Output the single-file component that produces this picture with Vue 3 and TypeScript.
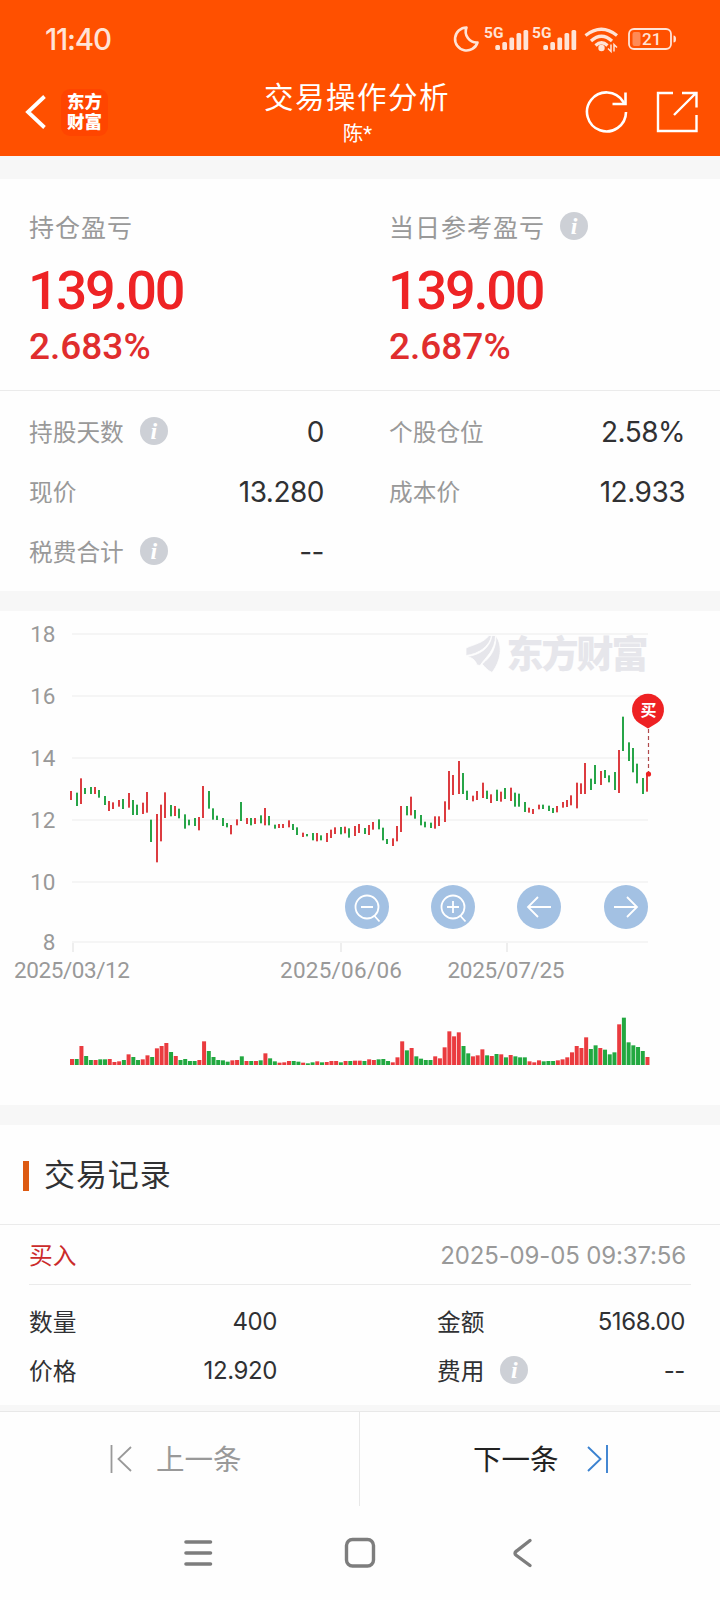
<script setup lang="ts">
interface Candle {
  x: number
  top: number
  height: number
  vx: number
  vh: number
  up: boolean
}

interface Field {
  label: string
  value: string
  info?: boolean
}

// Top and bottom of each bar in thirds of a pixel below y = 120 of the chart; r = rising, g = falling
const ranges: [number, number, string][] = [
  [153, 180, 'r'], [158, 198, 'g'], [115, 192, 'r'], [144, 162, 'g'], [141, 162, 'g'], [141, 162, 'r'],
  [150, 173, 'g'], [168, 195, 'g'], [183, 213, 'r'], [187, 207, 'r'], [180, 200, 'r'], [177, 207, 'g'],
  [159, 203, 'r'], [180, 225, 'g'], [194, 225, 'g'], [188, 222, 'r'], [156, 218, 'r'], [239, 306, 'g'],
  [222, 367, 'r'], [194, 304, 'r'], [157, 234, 'r'], [195, 229, 'g'], [198, 228, 'r'], [206, 235, 'g'],
  [223, 266, 'g'], [239, 256, 'g'], [234, 258, 'g'], [231, 271, 'r'], [138, 234, 'r'], [153, 206, 'g'],
  [205, 239, 'g'], [227, 240, 'g'], [234, 258, 'g'], [249, 262, 'g'], [255, 283, 'r'], [238, 256, 'r'],
  [186, 243, 'g'], [234, 252, 'r'], [234, 256, 'g'], [234, 252, 'r'], [226, 250, 'g'], [204, 256, 'r'],
  [228, 256, 'g'], [254, 266, 'g'], [252, 264, 'r'], [252, 264, 'r'], [241, 262, 'r'], [252, 270, 'g'],
  [262, 285, 'g'], [278, 291, 'r'], [282, 289, 'g'], [279, 301, 'g'], [279, 304, 'r'], [286, 301, 'g'],
  [279, 306, 'r'], [269, 294, 'r'], [262, 282, 'r'], [261, 283, 'g'], [260, 280, 'r'], [265, 293, 'g'],
  [258, 288, 'r'], [252, 279, 'r'], [264, 282, 'g'], [255, 285, 'r'], [246, 269, 'r'], [238, 268, 'g'],
  [263, 301, 'g'], [297, 312, 'g'], [295, 318, 'r'], [258, 304, 'r'], [198, 276, 'r'], [198, 226, 'g'],
  [170, 226, 'r'], [210, 236, 'g'], [225, 256, 'g'], [245, 262, 'g'], [248, 264, 'g'], [229, 266, 'r'],
  [229, 258, 'r'], [184, 246, 'r'], [93, 209, 'r'], [105, 165, 'r'], [63, 162, 'r'], [99, 162, 'g'],
  [152, 180, 'g'], [167, 184, 'r'], [153, 180, 'r'], [128, 174, 'r'], [152, 177, 'g'], [163, 189, 'r'],
  [149, 183, 'g'], [155, 185, 'r'], [144, 177, 'g'], [143, 183, 'r'], [158, 200, 'g'], [161, 200, 'g'],
  [186, 216, 'g'], [203, 218, 'r'], [207, 222, 'r'], [194, 208, 'r'], [194, 207, 'g'], [197, 213, 'g'],
  [204, 219, 'g'], [198, 217, 'r'], [186, 203, 'r'], [180, 201, 'r'], [166, 196, 'r'], [128, 205, 'r'],
  [130, 162, 'r'], [69, 162, 'r'], [116, 150, 'g'], [75, 132, 'g'], [93, 135, 'r'], [90, 114, 'g'],
  [106, 127, 'g'], [96, 150, 'g'], [30, 159, 'r'], [-70, 33, 'g'], [7, 63, 'g'], [24, 97, 'g'],
  [71, 130, 'g'], [114, 162, 'g'], [104, 155, 'r'],
]

// Upper edge of each volume bar in thirds of a pixel; the base line is at 195
const volumes: number[] = [
  177, 177, 138, 168, 180, 180, 178, 178, 177, 186, 184, 180, 163, 171, 180, 178, 166, 171, 145, 138,
  129, 156, 168, 180, 177, 183, 183, 180, 124, 153, 171, 180, 181, 185, 181, 180, 169, 183, 183, 183,
  181, 160, 175, 184, 188, 187, 183, 183, 185, 188, 190, 187, 184, 187, 186, 183, 183, 187, 183, 183,
  182, 182, 183, 178, 180, 178, 177, 183, 187, 172, 124, 151, 144, 169, 176, 180, 180, 169, 175, 142,
  94, 109, 97, 138, 160, 169, 166, 148, 166, 168, 162, 163, 172, 165, 169, 172, 172, 184, 187, 181,
  184, 183, 183, 181, 178, 172, 157, 138, 144, 112, 147, 136, 144, 149, 163, 157, 73, 53, 127, 136,
  141, 153, 171,
]

const candles: Candle[] = ranges.map(([top, bottom, kind], i) => ({
  x: 2 * Math.round((71.4 + i * 4.72 - 1) / 2),
  top: 120 + top / 3,
  height: (bottom - top) / 3,
  vx: 70 + i * 4.717,
  vh: (195 - volumes[i]) / 3,
  up: kind === 'r',
}))

const grid = [
  { label: '18', y: 14 },
  { label: '16', y: 76 },
  { label: '14', y: 138 },
  { label: '12', y: 200 },
  { label: '10', y: 262 },
  { label: '8', y: 322 },
]

const dates = [
  { text: '2025/03/12', x: 72, tick: 73, width: 116 },
  { text: '2025/06/06', x: 341, tick: 341, width: 122 },
  { text: '2025/07/25', x: 506, tick: 507, width: 117 },
]

const summary: Field[] = [
  { label: '持仓盈亏', value: '2.683%' },
  { label: '当日参考盈亏', value: '2.687%', info: true },
]

const stats: Field[] = [
  { label: '持股天数', value: '0', info: true },
  { label: '个股仓位', value: '2.58%' },
  { label: '现价', value: '13.280' },
  { label: '成本价', value: '12.933' },
  { label: '税费合计', value: '--', info: true },
]

const record: Field[] = [
  { label: '数量', value: '400' },
  { label: '金额', value: '5168.00' },
  { label: '价格', value: '12.920' },
  { label: '费用', value: '--', info: true },
]
</script>

<template>
  <div class="screen">
    <header class="top">
      <div class="status">
        <span class="clock">11:40</span>
        <svg width="226" height="34" viewBox="0 0 226 34">
          <path d="M13.5 5.5 A11.5 11.5 0 1 0 24.5 20.5 A11 11 0 0 1 13.5 5.5 Z" fill="none" stroke="#ffe3d6" stroke-width="2.6" stroke-linejoin="round" />
          <g v-for="ox in [0, 48]" :key="ox" fill="#ffe3d6">
            <text :x="31 + ox" y="15.5" class="net">5G</text>
            <rect :x="42.3 + ox" y="23" width="4.7" height="5" rx="1.5" />
            <rect :x="49.3 + ox" y="20" width="4.7" height="8" rx="1.5" />
            <rect :x="56.4 + ox" y="15.5" width="4.7" height="12.5" rx="1.5" />
            <rect :x="63.5 + ox" y="11" width="4.7" height="17" rx="1.5" />
            <rect :x="70.5 + ox" y="8" width="4.7" height="20" rx="1.5" />
          </g>
          <g fill="none" stroke="#ffe3d6" stroke-width="3.2">
            <path d="M132.5 13.5 Q148.500 1 164 13.5" />
            <path d="M138 19 Q148.500 9.500 159 19" />
            <path d="M142.500 23.500 Q148.500 18 154.500 23.500" />
          </g>
          <circle cx="148.500" cy="26" r="3.200" fill="#ffe3d6" />
          <path d="M158 22.500 V29.500 L155 26.500 M161 29.500 V22.500 L164 25.500" stroke="#ffe3d6" stroke-width="1.500" fill="none" />
          <rect x="176" y="7" width="42" height="20" rx="5" fill="none" stroke="#ffe3d6" stroke-width="1.800" />
          <rect x="179.500" y="10" width="8" height="14" rx="2" fill="#ff8a55" />
          <path d="M220.500 13.500 Q223 13.500 223 17 Q223 20.500 220.500 20.500 Z" fill="#ffe3d6" />
          <text x="189" y="23" class="level">21</text>
        </svg>
      </div>
      <div class="bar">
        <div class="side">
          <svg width="24" height="36" viewBox="0 0 24 36">
            <path d="M20.500 2.500 L4 18 L20.500 33.500" fill="none" stroke="#fff" stroke-width="3.800" />
          </svg>
          <div class="brand"><span>东方</span><span>财富</span></div>
        </div>
        <div class="title">
          <h1>交易操作分析</h1>
          <p>陈*</p>
        </div>
        <div class="side tools">
          <svg width="44" height="44" viewBox="0 0 44 44" fill="none" stroke="#fff" stroke-width="2.600">
            <path d="M41 22 A19.500 19.500 0 1 1 38 11.500 L39.500 14" />
            <path d="M40.500 2.500 V14 H27.500" />
          </svg>
          <svg width="44" height="44" viewBox="0 0 44 44" fill="none" stroke="#fff" stroke-width="2.400">
            <path d="M18 3 H3 V41 H41.500 V25" />
            <path d="M19 25 L40.500 3.500 M27 3 H41.500 V17.500" />
          </svg>
        </div>
      </div>
    </header>

    <section class="summary">
      <div v-for="s in summary" :key="s.label" class="sum">
        <div class="label big">{{ s.label }}<i v-if="s.info" class="info">i</i></div>
        <div class="amount">139.00</div>
        <div class="percent">{{ s.value }}</div>
      </div>
    </section>

    <section class="stats">
      <div v-for="s in stats" :key="s.label" class="cell">
        <span class="label">{{ s.label }}<i v-if="s.info" class="info">i</i></span>
        <span class="num">{{ s.value }}</span>
      </div>
    </section>

    <section class="chart">
      <svg width="720" height="494" viewBox="0 -9 720 494">
        <g v-for="g in grid" :key="g.label">
          <rect x="72" :y="g.y - 1" width="576" height="2" fill="#f5f5f5" />
          <text class="axis" x="55.500" :y="g.y + 8" text-anchor="end">{{ g.label }}</text>
        </g>
        <g v-for="d in dates" :key="d.text">
          <rect :x="d.tick - 1" y="323" width="2" height="9" fill="#eee" />
          <text class="axis" :x="d.x" y="358" text-anchor="middle" :textLength="d.width">{{ d.text }}</text>
        </g>
        <g fill="#e6e6eb" stroke="#fefefe" stroke-width="0.8">
          <path d="M466 28 C475 24 483 23 489 15.500 H491.500 C490 26 479 34 466 35.500 Z" />
          <path d="M467 36.500 C480 35 490 28 492 15.500 H495.500 C495.500 30 486 37 480 45.500 L477 45 C476 42 474 38 467 36.500 Z" />
          <path d="M482 44 C491 37 496 29 496 16 C503 26 501 41 492 52.500 C487 50 486 48 482 44 Z" />
        </g>
        <text class="mark" x="506.500" y="48" textLength="142">东方财富</text>
        <g v-for="(c, i) in candles" :key="i">
          <rect :x="c.x" :y="c.top" width="2" :height="c.height" :fill="c.up ? '#dc3c40' : '#27a548'" />
          <rect :x="c.vx" :y="445 - c.vh" width="4" :height="c.vh" :fill="c.up ? '#ea3b3f' : '#22a840'" />
        </g>
        <path d="M648.500 109 V153" stroke="#b04a4c" stroke-width="1.200" stroke-dasharray="4 3" />
        <circle cx="648.500" cy="154" r="2.600" fill="#ee2123" />
        <path d="M648 108.500 L639 103 A16 16 0 1 1 657 103 Z" fill="#ee2123" />
        <text class="flag" x="648.500" y="96" text-anchor="middle">买</text>
        <g fill="none" stroke="#fff" stroke-width="1.800">
          <circle v-for="cx in [367, 453, 539, 626]" :key="cx" :cx="cx" cy="287" r="22" fill="#a3c1e3" stroke="none" />
          <circle cx="367" cy="287" r="11.500" />
          <path d="M361 287 H373 M374.500 296 L379.500 301.500" />
          <circle cx="453" cy="287" r="11.500" />
          <path d="M447 287 H459 M453 281 V293 M460.500 296 L465.500 301.500" />
          <path d="M551 287 H528 M538 277 L528 287 L538 297" />
          <path d="M614 287 H637 M627 277 L637 287 L627 297" />
        </g>
      </svg>
    </section>

    <section class="records">
      <h2>交易记录</h2>
      <div class="trade">
        <span class="buy">买入</span>
        <span class="time">2025-09-05 09:37:56</span>
      </div>
      <div class="detail">
        <div v-for="r in record" :key="r.label" class="cell">
          <span class="name">{{ r.label }}<i v-if="r.info" class="info">i</i></span>
          <span class="small">{{ r.value }}</span>
        </div>
      </div>
    </section>

    <nav class="pager">
      <div class="prev">
        <svg width="24" height="30" viewBox="0 0 24 30" fill="none" stroke="#999" stroke-width="1.800">
          <path d="M2.500 1 V29 M22 3 L9.500 15 L22 27" />
        </svg>
        <span>上一条</span>
      </div>
      <div class="next">
        <span>下一条</span>
        <svg width="24" height="30" viewBox="0 0 24 30" fill="none" stroke="#3b82d0" stroke-width="1.900">
          <path d="M22 1 V29 M3 3 L15.500 15 L3 27" />
        </svg>
      </div>
    </nav>

    <footer class="system">
      <svg width="720" height="94" viewBox="0 0 720 94" fill="none" stroke="#7d7d7d" stroke-linecap="round">
        <path d="M186 36 H210.500 M186 47 H210.500 M186 58 H210.500" stroke-width="3.600" />
        <rect x="346.500" y="33.500" width="27" height="26.500" rx="6" stroke-width="3.400" />
        <path d="M530 34.500 L516.500 45 Q513.500 47 516.500 49.500 L530 59.500" stroke-width="3.400" />
      </svg>
    </footer>
  </div>
</template>

<style>
body {
  margin: 0;
  background: #fff;
}
</style>

<style scoped>
.screen {
  width: 720px;
  height: 1600px;
  overflow: hidden;
  background: #fefefe;
  color: #303133;
  font-family: Roboto, "Noto Sans CJK SC", sans-serif;
}
.top {
  height: 156px;
  background: #ff5000;
  color: #fff;
}
.status {
  display: flex;
  justify-content: space-between;
  align-items: center;
  height: 78px;
  padding: 0 41px 0 45px;
  color: #ffe3d6;
}
.clock {
  font-family: Inter, sans-serif;
  font-size: 29.500px;
  font-weight: 500;
  letter-spacing: -1.200px;
}
.net {
  font: 700 15.500px Roboto, sans-serif;
}
.level {
  font: 500 17px Roboto, sans-serif;
  fill: #ffe3d6;
}
.bar {
  display: flex;
  justify-content: space-between;
  height: 78px;
}
.side {
  display: flex;
  align-items: center;
  box-sizing: border-box;
  width: 174px;
  height: 68px;
  padding-left: 24px;
}
.brand {
  display: flex;
  flex-direction: column;
  justify-content: center;
  align-items: center;
  width: 47px;
  height: 47px;
  margin-left: 13px;
  border-radius: 9px;
  background: #ff4500;
  font-size: 17.500px;
  font-weight: 900;
  line-height: 20px;
}
.title {
  width: 200px;
  text-align: center;
}
.title h1 {
  margin: 0;
  padding: 5px 6px 0 0;
  font-size: 29.500px;
  font-weight: 400;
  line-height: 31px;
  letter-spacing: 1.500px;
  white-space: nowrap;
}
.title p {
  margin: 6px 0 0;
  padding-right: 5px;
  font-size: 20.500px;
  line-height: 28px;
}
.tools {
  justify-content: flex-end;
  gap: 26px;
  padding: 0 21px 0 0;
}
.summary {
  display: grid;
  grid-template-columns: 1fr 1fr;
  height: 211px;
  border-top: 23px solid #f7f7f7;
  border-bottom: 1px solid #ebebeb;
}
.sum {
  padding: 29px 0 0 29px;
}
.label {
  display: flex;
  align-items: center;
  color: #999;
}
.big {
  height: 36px;
  font-size: 25px;
  letter-spacing: 1px;
}
.big .info {
  margin-left: 15px;
}
.amount {
  margin-top: 14px;
  margin-left: -1px;
  color: #ee2325;
  font-size: 54px;
  font-weight: 500;
  line-height: 66px;
  letter-spacing: -2.200px;
}
.percent {
  margin-top: 3px;
  color: #e02d2d;
  font-size: 37px;
  font-weight: 500;
  line-height: 40px;
}
.info {
  display: inline-flex;
  justify-content: center;
  align-items: center;
  width: 28px;
  height: 28px;
  margin-left: 16px;
  border-radius: 50%;
  background: #cdd0d6;
  color: #fff;
  font: italic 700 24px/28px "Liberation Serif", serif;
  letter-spacing: 0;
}
.stats {
  display: grid;
  grid-template-columns: 1fr 1fr;
  grid-auto-rows: 60px;
  height: 190px;
  padding-top: 10px;
  border-bottom: 20px solid #f7f7f7;
}
.cell {
  display: flex;
  justify-content: space-between;
  align-items: center;
  padding: 0 36px 0 29px;
  font-size: 23.700px;
}
.cell:nth-child(even) {
  padding-right: 35px;
}
.num {
  padding-top: 2px;
  font-family: Inter, sans-serif;
  font-size: 28px;
  letter-spacing: -0.500px;
}
.chart {
  height: 494px;
  border-bottom: 20px solid #f7f7f7;
}
.chart svg,
.system svg {
  display: block;
}
.axis {
  fill: #999;
  font: 400 22.500px Roboto, sans-serif;
}
.mark {
  fill: #e6e6eb;
  font: 900 37px "Noto Sans CJK SC", sans-serif;
}
.flag {
  fill: #fff;
  font: 700 16px "Noto Sans CJK SC", sans-serif;
}
.records {
  height: 280px;
  border-bottom: 6px solid #f7f7f7;
}
.records h2 {
  display: flex;
  align-items: center;
  box-sizing: border-box;
  height: 100px;
  margin: 0;
  padding: 2px 0 0 23px;
  border-bottom: 1px solid #ebebeb;
  font-size: 31px;
  font-weight: 400;
  line-height: 44px;
  letter-spacing: 0.900px;
}
.records h2::before {
  width: 6px;
  height: 30px;
  margin-right: 15px;
  background: #dd5a12;
  content: "";
}
.trade {
  display: flex;
  justify-content: space-between;
  align-items: center;
  height: 59px;
  margin: 0 29px;
  padding-right: 5px;
  border-bottom: 1px solid #ebebeb;
  font-size: 23.700px;
}
.buy {
  margin-top: -2px;
  color: #cb2b2b;
}
.time {
  padding-top: 2px;
  color: #999;
  font-family: Inter, sans-serif;
  font-size: 24px;
  letter-spacing: -0.150px;
}
.detail {
  display: grid;
  grid-template-columns: 1fr 1fr;
  grid-auto-rows: 49px;
  padding-top: 11px;
}
.detail .cell {
  padding-right: 83px;
}
.detail .cell:nth-child(even) {
  padding: 0 35px 0 77px;
}
.name {
  display: flex;
  align-items: center;
}
.small {
  padding-top: 2px;
  font-family: Inter, sans-serif;
  font-size: 24px;
  letter-spacing: -0.400px;
}
.pager {
  display: grid;
  grid-template-columns: 360px 360px;
  height: 94px;
  border-top: 1px solid #e8e8e8;
  font-size: 28.500px;
}
.pager div {
  display: flex;
  align-items: center;
}
.pager span {
  margin-top: -3px;
}
.prev {
  gap: 23px;
  padding-left: 109px;
  border-right: 1px solid #e8e8e8;
  color: #999;
}
.next {
  gap: 26px;
  padding-left: 113px;
  color: #222;
}
</style>
